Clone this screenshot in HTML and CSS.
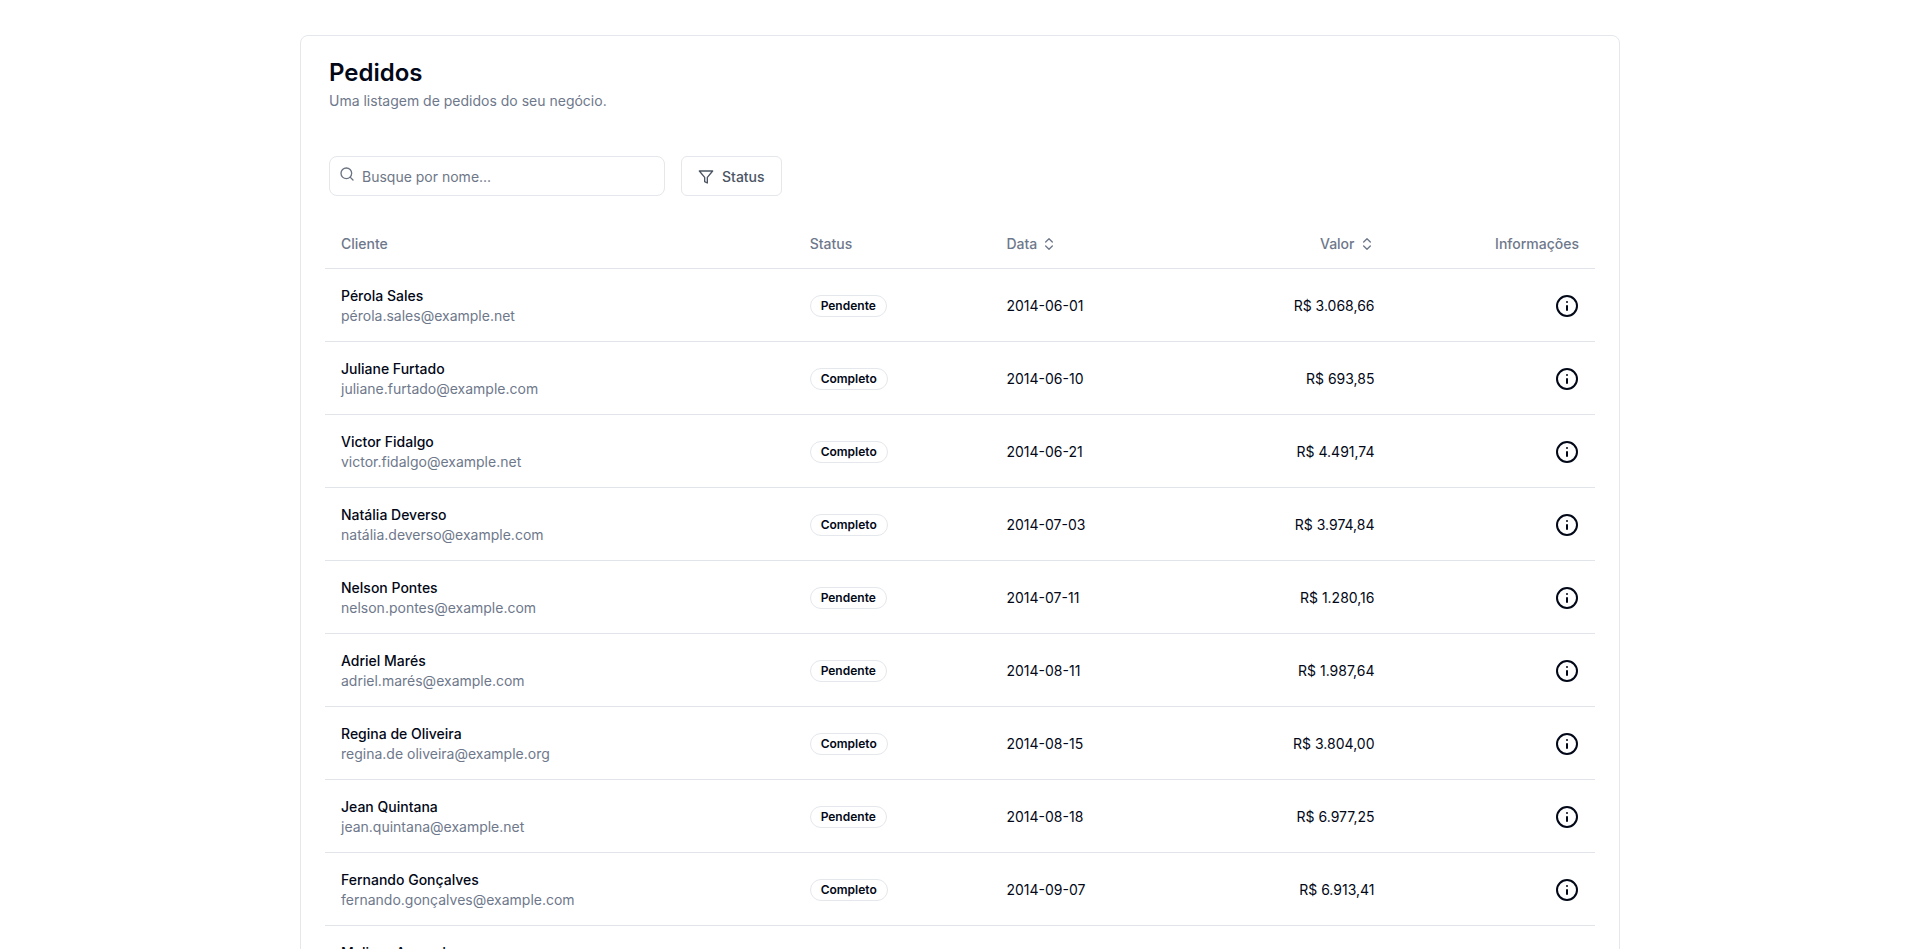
FILE: index.html
```html
<!DOCTYPE html>
<html lang="pt-BR">
<head>
<meta charset="utf-8">
<meta name="viewport" content="width=device-width, initial-scale=1">
<title>Pedidos</title>
<link rel="stylesheet" href="styles.css">
</head>
<body>
<svg class="sprite" aria-hidden="true">
  <symbol id="info" viewBox="0 0 24 24"><circle cx="12" cy="12" r="10"/><path d="M12 16v-4"/><path d="M12 8h.01"/></symbol>
  <symbol id="sort" viewBox="0 0 24 24"><path d="m7 15 5 5 5-5"/><path d="m7 9 5-5 5 5"/></symbol>
</svg>
<main class="card">
  <header class="card-header">
    <h1 class="title">Pedidos</h1>
    <p class="description">Uma listagem de pedidos do seu negócio.</p>
  </header>
  <div class="filters">
    <div class="search">
      <svg class="icon search-icon" viewBox="0 0 24 24" aria-hidden="true"><circle cx="11" cy="11" r="8"/><path d="m21 21-4.3-4.3"/></svg>
      <input class="search-input" type="text" placeholder="Busque por nome..." aria-label="Busque por nome">
    </div>
    <button class="filter-button" type="button">
      <svg class="icon" viewBox="0 0 24 24" aria-hidden="true"><path d="M22 3H2l8 9.46V19l4 2v-8.54L22 3z"/></svg>
      Status
    </button>
  </div>
  <table class="orders">
    <colgroup><col class="col-client"><col class="col-status"><col class="col-date"><col class="col-value"><col class="col-info"></colgroup>
    <thead>
      <tr>
        <th scope="col">Cliente</th>
        <th scope="col">Status</th>
        <th scope="col"><button class="sort" type="button">Data <svg class="icon"><use href="#sort"/></svg></button></th>
        <th scope="col" class="right"><button class="sort" type="button">Valor <svg class="icon"><use href="#sort"/></svg></button></th>
        <th scope="col" class="right">Informações</th>
      </tr>
    </thead>
    <tbody>
      <tr><td><div class="name">Pérola Sales</div><div class="email">pérola.sales@example.net</div></td><td><span class="badge">Pendente</span></td><td>2014-06-01</td><td class="right">R$ 3.068,66</td><td><button class="info" type="button" aria-label="Informações"><svg class="icon"><use href="#info"/></svg></button></td></tr>
      <tr><td><div class="name">Juliane Furtado</div><div class="email">juliane.furtado@example.com</div></td><td><span class="badge">Completo</span></td><td>2014-06-10</td><td class="right">R$ 693,85</td><td><button class="info" type="button" aria-label="Informações"><svg class="icon"><use href="#info"/></svg></button></td></tr>
      <tr><td><div class="name">Victor Fidalgo</div><div class="email">victor.fidalgo@example.net</div></td><td><span class="badge">Completo</span></td><td>2014-06-21</td><td class="right">R$ 4.491,74</td><td><button class="info" type="button" aria-label="Informações"><svg class="icon"><use href="#info"/></svg></button></td></tr>
      <tr><td><div class="name">Natália Deverso</div><div class="email">natália.deverso@example.com</div></td><td><span class="badge">Completo</span></td><td>2014-07-03</td><td class="right">R$ 3.974,84</td><td><button class="info" type="button" aria-label="Informações"><svg class="icon"><use href="#info"/></svg></button></td></tr>
      <tr><td><div class="name">Nelson Pontes</div><div class="email">nelson.pontes@example.com</div></td><td><span class="badge">Pendente</span></td><td>2014-07-11</td><td class="right">R$ 1.280,16</td><td><button class="info" type="button" aria-label="Informações"><svg class="icon"><use href="#info"/></svg></button></td></tr>
      <tr><td><div class="name">Adriel Marés</div><div class="email">adriel.marés@example.com</div></td><td><span class="badge">Pendente</span></td><td>2014-08-11</td><td class="right">R$ 1.987,64</td><td><button class="info" type="button" aria-label="Informações"><svg class="icon"><use href="#info"/></svg></button></td></tr>
      <tr><td><div class="name">Regina de Oliveira</div><div class="email">regina.de oliveira@example.org</div></td><td><span class="badge">Completo</span></td><td>2014-08-15</td><td class="right">R$ 3.804,00</td><td><button class="info" type="button" aria-label="Informações"><svg class="icon"><use href="#info"/></svg></button></td></tr>
      <tr><td><div class="name">Jean Quintana</div><div class="email">jean.quintana@example.net</div></td><td><span class="badge">Pendente</span></td><td>2014-08-18</td><td class="right">R$ 6.977,25</td><td><button class="info" type="button" aria-label="Informações"><svg class="icon"><use href="#info"/></svg></button></td></tr>
      <tr><td><div class="name">Fernando Gonçalves</div><div class="email">fernando.gonçalves@example.com</div></td><td><span class="badge">Completo</span></td><td>2014-09-07</td><td class="right">R$ 6.913,41</td><td><button class="info" type="button" aria-label="Informações"><svg class="icon"><use href="#info"/></svg></button></td></tr>
      <tr><td><div class="name">Melissa Azevedo</div><div class="email">melissa.azevedo@example.com</div></td><td><span class="badge">Pendente</span></td><td>2014-09-12</td><td class="right">R$ 2.415,30</td><td><button class="info" type="button" aria-label="Informações"><svg class="icon"><use href="#info"/></svg></button></td></tr>
    </tbody>
  </table>
</main>
</body>
</html>
```
FILE: styles.css
```css
* { box-sizing: border-box; }

html { scrollbar-width: none; }

body {
  margin: 0;
  padding: 35px 24px;
  background: #fff;
  color: #020817;
  font: 14px/20px Inter, "Liberation Sans", sans-serif;
}

button, input { font: inherit; color: inherit; }

.sprite { position: absolute; width: 0; height: 0; }

.card {
  max-width: 1320px;
  margin: 0 auto;
  padding: 21px 24px 24px;
  border: 1px solid #e4e7eb;
  border-radius: 8px;
}

.card-header { padding: 0 4px; }

.title { margin: 0; font-size: 24px; line-height: 32px; font-weight: 600; }

.description { margin: 2px 0 0; color: #6e788b; }

.filters { display: flex; gap: 16px; padding: 0 4px; margin: 45px 0 24px; }

.search { position: relative; flex: 0 1 336px; }

.search-input {
  width: 100%;
  height: 40px;
  padding: 8px 12px 8px 32px;
  border: 1px solid #e4e7eb;
  border-radius: 8px;
  background: #fff;
}

.search-input::placeholder { color: #6e7787; opacity: 1; }

.icon {
  width: 16px;
  height: 16px;
  flex: none;
  fill: none;
  stroke: currentColor;
  stroke-width: 2;
  stroke-linecap: round;
  stroke-linejoin: round;
}

.search-icon { position: absolute; left: 10px; top: 10px; color: #6b7280; }

.filter-button {
  display: flex;
  align-items: center;
  gap: 8px;
  height: 40px;
  padding: 9px 16px 7px;
  border: 1px solid #e4e7eb;
  border-radius: 6px;
  background: #fff;
  color: #4b5563;
  font-weight: 500;
}

.orders { width: 100%; border-collapse: collapse; table-layout: fixed; }

.col-client { width: 36.9%; }
.col-status { width: 15.5%; }
.col-date { width: 17%; }
.col-value { width: 14.5%; }
.col-info { width: 16.1%; }

.orders tr { border-bottom: 1px solid #e1e5e9; }

.orders th {
  height: 48px;
  padding: 1px 16px 0;
  color: #6e788b;
  font-weight: 500;
  text-align: left;
}

.orders td { padding: 17px 16px 15px; }

.orders .right { text-align: right; }

.name { font-weight: 500; }

.email { color: #6e788b; }

.sort {
  display: inline-flex;
  align-items: center;
  gap: 4px;
  padding: 0;
  border: 0;
  background: none;
  font-weight: 500;
}

.badge {
  display: inline-block;
  padding: 2px 10px;
  border: 1px solid #e4e7eb;
  border-radius: 999px;
  font-size: 12px;
  line-height: 16px;
  font-weight: 600;
}

.info {
  display: block;
  margin-left: auto;
  padding: 0;
  border: 0;
  background: none;
}

.info .icon { display: block; width: 24px; height: 24px; }
```
